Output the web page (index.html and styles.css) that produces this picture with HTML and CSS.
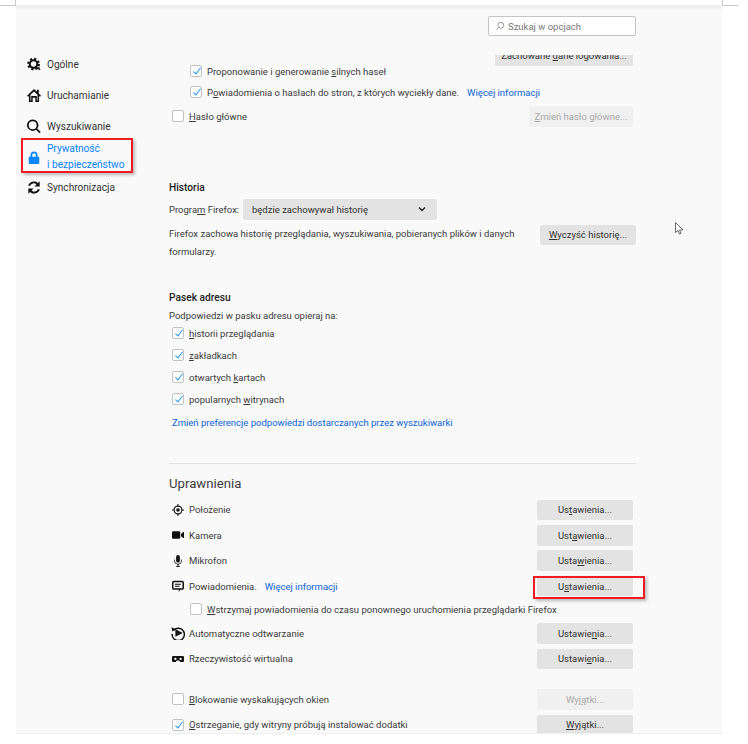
FILE: index.html
```html
<!DOCTYPE html>
<html lang="pl">
<head>
  <meta charset="utf-8">
  <title>Opcje</title>
  <link rel="stylesheet" href="styles.css">
</head>
<body>
  <span class="corner corner-left"></span>
  <span class="corner corner-right"></span>
  <div class="window">
    <div class="topband"></div>
    <div class="layout">
      <nav class="sidebar">
        <a class="cat">
          <svg class="cat-icon" viewBox="0 0 16 16"><circle class="gear-ring" cx="7.500" cy="7.500" r="4.300"/><circle class="gear-teeth" cx="7.500" cy="7.500" r="6"/><path d="M11 11l1.500.5 1-1 1 .5-.4 1.300 1.400 1.200-1 1.200-1.500-1.200-1 .2z"/></svg>
          <span>Ogólne</span>
        </a>
        <a class="cat">
          <svg class="cat-icon" viewBox="0 0 16 16"><path d="M8 .5L0 8.200l1.200 1.300 1-.9V15.500h4.300v-5h3v5h4.300V8.600l1 .9L16 8.200 13.500 5.800V1.500h-2.200v2.200zM4 7.200l4-3.900 4 3.900v6.500h-.8v-5H4.800v5H4z"/></svg>
          <span>Uruchamianie</span>
        </a>
        <a class="cat">
          <svg class="cat-icon" viewBox="0 0 16 16"><path d="M6.500 0a6.500 6.500 0 0 1 5.200 10.400l4 4-1.400 1.400-4-4A6.500 6.500 0 1 1 6.500 0zm0 2a4.500 4.500 0 1 0 0 9 4.500 4.500 0 0 0 0-9z"/></svg>
          <span>Wyszukiwanie</span>
        </a>
        <a class="cat cat-active">
          <svg class="cat-icon" viewBox="0 0 16 16"><path d="M8 1a4 4 0 0 1 4 4v2h1a1 1 0 0 1 1 1v6a1.500 1.500 0 0 1-1.500 1.500h-9A1.500 1.500 0 0 1 2 14V8a1 1 0 0 1 1-1h1V5a4 4 0 0 1 4-4zm0 2a2 2 0 0 0-2 2v2h4V5a2 2 0 0 0-2-2z"/></svg>
          <span>Prywatność<br>i bezpieczeństwo</span>
        </a>
        <a class="cat">
          <svg class="cat-icon" viewBox="0 0 16 16"><path d="M14.500.8v6h-6l2.300-2.300A4.500 4.500 0 0 0 3.600 6H1.300a6.700 6.700 0 0 1 11.100-3.100zM1.500 15.200v-6h6l-2.300 2.300A4.500 4.500 0 0 0 12.400 10h2.300a6.700 6.700 0 0 1-11.100 3.100z"/></svg>
          <span>Synchronizacja</span>
        </a>
      </nav>

      <main class="main">
        <header class="searchbar">
          <div class="search">
            <svg class="search-icon" viewBox="0 0 12 12"><circle cx="7" cy="5" r="3.500"/><path d="M4.500 7.500L1.500 10.500"/></svg>
            <span>Szukaj w opcjach</span>
          </div>
        </header>

        <div class="scroller">
          <div class="indent-end clipped-btn"><button class="btn btn-wide">Zachowane <u>d</u>ane logowania...</button></div>

          <label class="line sub"><span class="check on"></span><span>Proponowanie i generowanie <u>s</u>ilnych haseł</span></label>
          <label class="line sub"><span class="check on"></span><span>P<u>o</u>wiadomienia o hasłach do stron, z których wyciekły dane.</span><a class="link">Więcej informacji</a></label>
          <div class="line spread">
            <label class="line-in"><span class="check"></span><span><u>H</u>asło główne</span></label>
            <button class="btn btn-off btn-master"><u>Z</u>mień hasło główne...</button>
          </div>

          <h3 class="subhead history-head">Historia</h3>
          <div class="line history-mode">
            <span class="mode-label">Progra<u>m</u> Firefox:</span>
            <div class="select"><span>będzie zachowywał historię</span>
              <svg class="caret" viewBox="0 0 8 6"><path d="M1 1.500L4 4.500L7 1.500"/></svg>
            </div>
          </div>
          <div class="history-info">
            <p>Firefox zachowa historię przeglądania, wyszukiwania, pobieranych plików i danych formularzy.</p>
            <button class="btn btn-clear"><u>W</u>yczyść historię...</button>
          </div>

          <h3 class="subhead bar-head">Pasek adresu</h3>
          <p class="bar-lead">Podpowiedzi w pasku adresu opieraj na:</p>
          <div class="bar-list">
            <label class="bar-item"><span class="check on"></span><span><u>h</u>istorii przeglądania</span></label>
            <label class="bar-item"><span class="check on"></span><span><u>z</u>akładkach</span></label>
            <label class="bar-item"><span class="check on"></span><span>otwartych <u>k</u>artach</span></label>
            <label class="bar-item"><span class="check on"></span><span>popularnych <u>w</u>itrynach</span></label>
          </div>
          <a class="link link-block">Zmień preferencje podpowiedzi dostarczanych przez wyszukiwarki</a>

          <hr class="rule">

          <h2 class="head">Uprawnienia</h2>
          <div class="perms">
            <div class="perm">
              <svg class="perm-icon" viewBox="0 0 16 16"><path fill-rule="evenodd" d="M7.300 0h1.400v2.100a6 6 0 0 1 5.200 5.200H16v1.400h-2.100a6 6 0 0 1-5.200 5.200V16H7.300v-2.100a6 6 0 0 1-5.200-5.200H0V7.300h2.100a6 6 0 0 1 5.200-5.200zM8 3.600a4.400 4.400 0 1 0 0 8.800 4.400 4.400 0 0 0 0-8.800zm0 2a2.400 2.400 0 1 1 0 4.800 2.400 2.400 0 0 1 0-4.800z"/></svg>
              <span>Położenie</span>
              <button class="btn btn-perm">Us<u>t</u>awienia...</button>
            </div>
            <div class="perm">
              <svg class="perm-icon" viewBox="0 0 16 16"><path d="M1.500 3h8A1.500 1.500 0 0 1 11 4.500v7A1.500 1.500 0 0 1 9.500 13h-8A1.500 1.500 0 0 1 0 11.500v-7A1.500 1.500 0 0 1 1.500 3zM12 6.500l3-2.500h1v8h-1l-3-2.500z"/></svg>
              <span>Kamera</span>
              <button class="btn btn-perm">Ust<u>a</u>wienia...</button>
            </div>
            <div class="perm">
              <svg class="perm-icon" viewBox="0 0 16 16"><path d="M8 0a2.500 2.500 0 0 1 2.500 2.500v5a2.500 2.500 0 0 1-5 0v-5A2.500 2.500 0 0 1 8 0zM4 6v1.500a4 4 0 0 0 8 0V6h1v1.500a5 5 0 0 1-4.300 5V15h2v1H5.300v-1h2v-2.500A5 5 0 0 1 3 7.500V6z"/></svg>
              <span>Mikrofon</span>
              <button class="btn btn-perm">Usta<u>w</u>ienia...</button>
            </div>
            <div class="perm">
              <svg class="perm-icon" viewBox="0 0 16 16"><path fill-rule="evenodd" d="M2.500 1h11A2.500 2.500 0 0 1 16 3.500v7a2.500 2.500 0 0 1-2.500 2.500H11l-2 3v-3H2.500A2.500 2.500 0 0 1 0 10.500v-7A2.500 2.500 0 0 1 2.500 1zm0 2a.5.5 0 0 0-.5.5v7a.5.5 0 0 0 .5.5h11a.5.5 0 0 0 .5-.5v-7a.5.5 0 0 0-.5-.5zM4 5h8v1.300H4zm0 2.700h6V9H4z"/></svg>
              <span>Powiadomienia.</span><a class="link">Więcej informacji</a>
              <button class="btn btn-perm">U<u>s</u>tawienia...</button>
            </div>
            <label class="line sub pause"><span class="check"></span><span><u>W</u>strzymaj powiadomienia do czasu ponownego uruchomienia przeglądarki Firefox</span></label>
            <div class="perm">
              <svg class="perm-icon icon-play" viewBox="0 0 16 16"><path class="play-arc" d="M3.200 4.800A7 7 0 1 1 1.300 9"/><path d="M0.500 1.500l4.500 2-3.300 3.200zM5 3.800v8.400L13.500 8z"/></svg>
              <span>Automatyczne odtwarzanie</span>
              <button class="btn btn-perm">Ustawie<u>n</u>ia...</button>
            </div>
            <div class="perm">
              <svg class="perm-icon" viewBox="0 0 16 16"><path fill-rule="evenodd" d="M1.500 4h13A1.500 1.500 0 0 1 16 5.500v5a1.500 1.500 0 0 1-1.500 1.500H11l-1.500-2h-3L5 12H1.500A1.500 1.500 0 0 1 0 10.500v-5A1.500 1.500 0 0 1 1.500 4zM4.500 6.200a1.600 1.600 0 1 0 0 3.200 1.600 1.600 0 0 0 0-3.200zm7 0a1.600 1.600 0 1 0 0 3.200 1.600 1.600 0 0 0 0-3.200z"/></svg>
              <span>Rzeczywistość wirtualna</span>
              <button class="btn btn-perm">Ustawi<u>e</u>nia...</button>
            </div>
          </div>

          <div class="perm block-row">
            <label class="line-in"><span class="check"></span><span><u>B</u>lokowanie wyskakujących okien</span></label>
            <button class="btn btn-perm btn-off">Wyj<u>ą</u>tki...</button>
          </div>
          <div class="perm">
            <label class="line-in"><span class="check on"></span><span><u>O</u>strzeganie, gdy witryny próbują instalować dodatki</span></label>
            <button class="btn btn-perm"><u>W</u>yjątki...</button>
          </div>
        </div>
      </main>
    </div>
  </div>
  <div class="bottomband"></div>

  <div class="mark mark-privacy"></div>
  <div class="mark mark-notify"></div>
  <svg class="cursor" viewBox="0 0 9 13"><path d="M.5.500v10l2.500-2 1.500 3.500 1.500-.7L4.500 8h3.500z"/></svg>
</body>
</html>
```

FILE: styles.css
```css
html {
  font-family: Roboto, "Noto Sans", Arial, sans-serif;
  font-size: 9.500px;
  color: #3a3a3a;
}
body {
  margin: 0;
  height: 744px;
  overflow: hidden;
  background-color: #fff;
}
p, h2, h3 {
  margin: 0;
}
u {
  text-underline-offset: 1px;
}

/* page edge marks of the document behind */
.corner {
  position: absolute;
  top: 0;
  width: 15px;
  height: 5px;
  border-bottom: 1px solid #c8c8c8;
}
.corner-left {
  left: 0;
  border-right: 1px solid #c8c8c8;
}
.corner-right {
  left: 722px;
  border-left: 1px solid #c8c8c8;
}

.window {
  margin: 5px 0 0 16px;
  width: 706px;
  height: 728px;
  overflow: hidden;
  background-color: #f9f9f9;
}
.topband {
  height: 4px;
  background-color: #efefef;
}
.bottomband {
  margin-left: 16px;
  width: 706px;
  height: 1px;
  background-color: #efefef;
}
.layout {
  display: flex;
  height: 724px;
}

/* sidebar */
.sidebar {
  width: 153px;
  flex: none;
  padding: 47px 0 0 11px;
  box-sizing: border-box;
}
.cat {
  display: flex;
  align-items: center;
  height: 16px;
  margin-bottom: 15px;
  font-size: 10.100px;
  color: #333;
}
.cat-icon {
  width: 14px;
  height: 15px;
  margin-right: 6px;
  flex: none;
  fill: #111;
}
.gear-ring {
  fill: none;
  stroke: #111;
  stroke-width: 2.400;
}
.gear-teeth {
  fill: none;
  stroke: #111;
  stroke-width: 2.600;
  stroke-dasharray: 2.400 2.300;
}
.cat-active {
  height: 32px;
  margin: -8px 0 6px;
  line-height: 16px;
  color: #0a84ff;
}
.cat-active .cat-icon {
  fill: #0a84ff;
}

/* main column */
.main {
  width: 467px;
  flex: none;
}
.searchbar {
  height: 46px;
  padding-top: 7px;
  box-sizing: border-box;
  display: flex;
  justify-content: flex-end;
}
.search {
  width: 148px;
  height: 20px;
  box-sizing: border-box;
  display: flex;
  align-items: center;
  gap: 3px;
  padding-left: 6px;
  background-color: #fff;
  border: 1px solid #c4c4c4;
  border-radius: 2px;
  color: #777;
}
.search-icon {
  width: 10px;
  height: 10px;
  fill: none;
  stroke: #888;
  stroke-width: 1;
}
.scroller {
  height: 678px;
  overflow: hidden;
}

/* controls */
.btn {
  display: block;
  height: 20.600px;
  padding: 0;
  border: none;
  border-radius: 2px;
  background-color: #e3e3e3;
  font: inherit;
  color: #333;
  text-align: center;
  white-space: nowrap;
}
.btn-off {
  background-color: #f0f0f0;
  color: #a8a8a8;
}
.btn-wide {
  width: 138px;
}
.btn-master {
  width: 104px;
  height: 21px;
  margin-right: 3px;
}
.btn-clear {
  width: 96px;
  flex: none;
}
.btn-perm {
  width: 96px;
  margin-left: auto;
  margin-right: 3px;
  flex: none;
}
.check {
  display: inline-block;
  box-sizing: border-box;
  width: 12px;
  height: 12px;
  margin-right: 5px;
  flex: none;
  position: relative;
  background-color: #fff;
  border: 1px solid #c2c2c2;
  border-radius: 2px;
}
.check.on:after {
  content: "";
  position: absolute;
  left: 4px;
  top: 0;
  width: 3px;
  height: 7px;
  border: solid #2b9af3;
  border-width: 0 1.300px 1.300px 0;
  transform: rotate(38deg);
}
.link {
  color: #0b63d6;
}

/* rows */
.indent-end {
  display: flex;
  justify-content: flex-end;
  padding-right: 3px;
}
.clipped-btn {
  margin-top: -10px;
  margin-bottom: -5px;
}
.line {
  display: flex;
  align-items: center;
  height: 21px;
}
.line-in {
  display: flex;
  align-items: center;
  padding-left: 3px;
}
.sub {
  padding-left: 21px;
}
.sub .link {
  margin-left: 8px;
}
.spread {
  justify-content: space-between;
  margin-top: 3px;
}
.subhead {
  font-size: 10.200px;
  font-weight: 500;
  line-height: 18px;
  color: #222;
}
.history-head {
  margin-top: 52px;
}
.history-mode {
  margin-top: 2px;
}
.mode-label {
  width: 74px;
  flex: none;
}
.select {
  display: flex;
  align-items: center;
  justify-content: space-between;
  width: 194px;
  height: 21px;
  padding: 0 11px 0 9px;
  box-sizing: border-box;
  background-color: #e3e3e3;
  border-radius: 2px;
  color: #333;
}
.caret {
  width: 8px;
  height: 6px;
  fill: none;
  stroke: #222;
  stroke-width: 1.400;
}
.history-info {
  display: flex;
  justify-content: space-between;
  margin-top: 5px;
}
.history-info p {
  width: 352px;
  line-height: 18px;
}
.bar-head {
  margin-top: 28px;
}
.bar-lead {
  line-height: 18px;
}
.bar-list {
  margin-top: -2.500px;
}
.bar-item {
  display: flex;
  align-items: center;
  height: 22px;
  padding-left: 3px;
}
.link-block {
  display: block;
  margin-top: 3.500px;
  padding-left: 3px;
  line-height: 18px;
}
.rule {
  margin: 31px 0 0;
  border: none;
  height: 1px;
  background-color: #e2e2e2;
}
.head {
  margin-top: 10px;
  font-size: 13.200px;
  font-weight: 400;
  line-height: 20px;
  color: #3c3c3c;
}
.perms {
  margin-top: 6px;
}
.perm {
  display: flex;
  align-items: center;
  height: 20.600px;
  margin-bottom: 4.800px;
}
.perm-icon {
  width: 12px;
  height: 12px;
  margin: 0 5px 0 3px;
  flex: none;
  fill: #111;
}
.icon-play {
  margin-left: 2px;
  margin-right: 4px;
  width: 14px;
  height: 14px;
}
.play-arc {
  fill: none;
  stroke: #111;
  stroke-width: 1.700;
}
.perm .link {
  margin-left: 8px;
}
.pause {
  height: 18px;
  margin: -1px 0 5px;
}
.block-row {
  margin-top: 20px;
}

/* screenshot annotations */
.mark {
  position: absolute;
  box-sizing: border-box;
  border: 2px solid #ee1c25;
  box-shadow: 2px 2px 3px rgba(0,0,0,.25);
}
.mark-privacy {
  left: 21px;
  top: 138px;
  width: 112px;
  height: 35px;
}
.mark-notify {
  left: 533px;
  top: 576px;
  width: 112px;
  height: 23px;
}
.cursor {
  position: absolute;
  left: 675px;
  top: 222px;
  width: 9px;
  height: 13px;
  fill: #fff;
  stroke: #444;
  stroke-width: .8;
}
```
